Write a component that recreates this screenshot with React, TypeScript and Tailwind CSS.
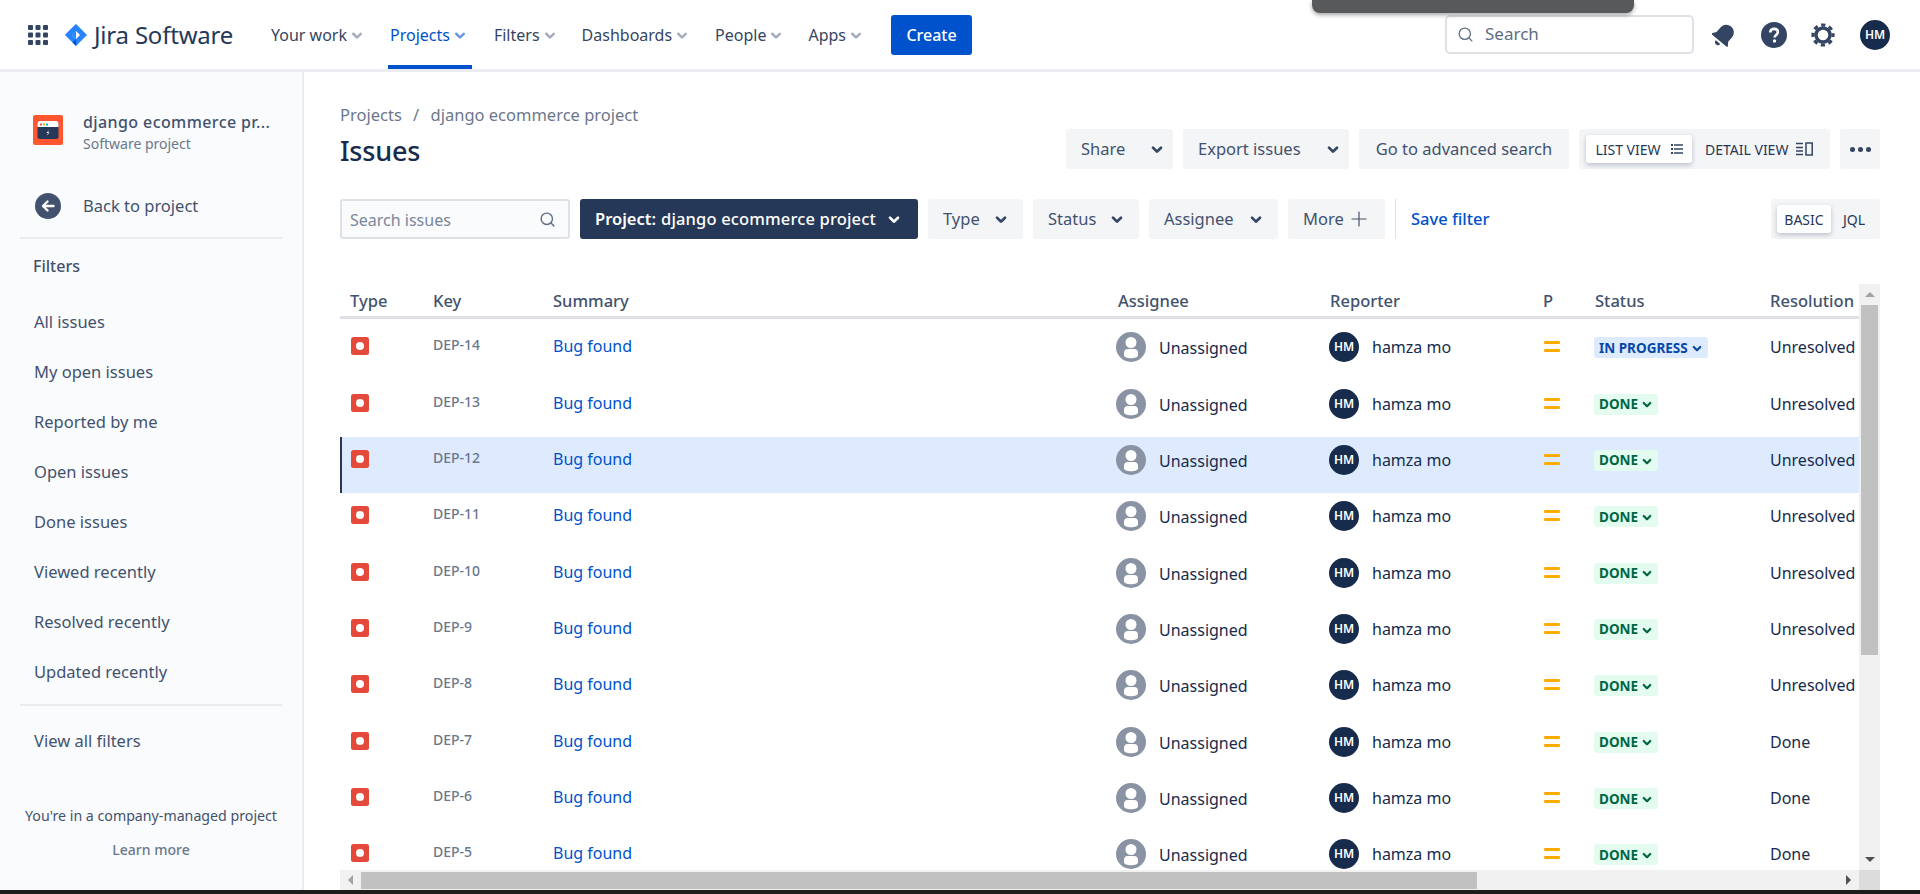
import { Search, Plus } from 'lucide-react';

const CHEVRON = 'M8.292 10.293a1.009 1.009 0 000 1.419l2.939 2.965c.218.215.5.322.779.322s.556-.107.769-.322l2.93-2.955a1.01 1.01 0 000-1.419.987.987 0 00-1.406 0l-2.298 2.317-2.307-2.327a.99.99 0 00-1.406 0z';

const navItems = [
  { label: 'Your work', className: 'ml-[37px]' },
  { label: 'Projects', className: 'ml-[24px]', active: true },
  { label: 'Filters', className: 'ml-[25px]' },
  { label: 'Dashboards', className: 'ml-[23px]' },
  { label: 'People', className: 'ml-[24px]' },
  { label: 'Apps', className: 'ml-[23px]' },
];

const filterLinks = [
  'All issues',
  'My open issues',
  'Reported by me',
  'Open issues',
  'Done issues',
  'Viewed recently',
  'Resolved recently',
  'Updated recently',
];

const issues = [
  { key: 'DEP-14', status: 'IN PROGRESS', resolution: 'Unresolved' },
  { key: 'DEP-13', status: 'DONE', resolution: 'Unresolved' },
  { key: 'DEP-12', status: 'DONE', resolution: 'Unresolved', selected: true },
  { key: 'DEP-11', status: 'DONE', resolution: 'Unresolved' },
  { key: 'DEP-10', status: 'DONE', resolution: 'Unresolved' },
  { key: 'DEP-9', status: 'DONE', resolution: 'Unresolved' },
  { key: 'DEP-8', status: 'DONE', resolution: 'Unresolved' },
  { key: 'DEP-7', status: 'DONE', resolution: 'Done' },
  { key: 'DEP-6', status: 'DONE', resolution: 'Done' },
  { key: 'DEP-5', status: 'DONE', resolution: 'Done' },
];

function Chevron({ className }: { className?: string }) {
  return (
    <svg viewBox="0 0 24 24" className={className} fill="currentColor">
      <path d={CHEVRON} />
    </svg>
  );
}

function GridIcon() {
  return (
    <svg width="20" height="20" viewBox="0 0 20 20" fill="#344563">
      {[0, 7.5, 15].map(y =>
        [0, 7.5, 15].map(x => <rect key={`${x}-${y}`} x={x} y={y} width="5" height="5" rx="1" />)
      )}
    </svg>
  );
}

function JiraLogo() {
  return (
    <svg width="22" height="22" viewBox="0 0 22 22">
      <path d="M11 0 L22 11 L11 22 L0 11 Z" fill="#2684ff" />
      <path d="M11 7 L15 11 L11 15 L7 11 Z" fill="#fff" />
      <path d="M11 0 L11 7 L7 11 L0 11 Z" fill="#2684ff" />
      <path d="M11 7 L7 11 L11 15 Z" fill="#2684ff" />
      <path d="M11 15 L11 22 L7.5 18.5 Z" fill="#0052cc" />
    </svg>
  );
}

function BellIcon() {
  return (
    <svg width="28" height="28" viewBox="0 0 24 24" fill="#344563" className="rotate-[40deg] -mx-[2px]">
      <path d="M12 2.5a6.5 6.5 0 00-6.5 6.5v5.2L3.4 17c-.4.6 0 1.3.7 1.3h15.8c.7 0 1.1-.7.7-1.3l-2.1-2.8V9A6.5 6.5 0 0012 2.5z" />
      <path d="M9.5 20h5a2.5 2.5 0 01-5 0z" />
    </svg>
  );
}

function HelpIcon() {
  return (
    <svg width="26" height="26" viewBox="0 0 26 26">
      <circle cx="13" cy="13" r="13" fill="#344563" />
      <path d="M9.2 10.4c0-2.2 1.7-3.5 3.9-3.5 2.2 0 3.8 1.3 3.8 3.2 0 2.8-3.3 2.8-3.3 5.4" fill="none" stroke="#fff" strokeWidth="2.6" />
      <circle cx="13.5" cy="19" r="1.7" fill="#fff" />
    </svg>
  );
}

function GearIcon() {
  return (
    <svg width="24" height="24" viewBox="0 0 24 24" fill="none" stroke="#344563">
      <circle cx="12" cy="12" r="7" strokeWidth="3.4" />
      <circle cx="12" cy="12" r="10" strokeWidth="3.2" strokeDasharray="4.2 3.65" strokeDashoffset="2.1" />
    </svg>
  );
}

function ProjectIcon() {
  return (
    <svg width="30" height="30" viewBox="0 0 30 30" className="shrink-0">
      <rect width="30" height="30" rx="2" fill="#ff5630" />
      <rect x="4.5" y="6" width="21" height="18" rx="2.5" fill="#253858" />
      <path d="M4.5 8.5a2.5 2.5 0 012.5-2.5h16a2.5 2.5 0 012.5 2.5V12h-21z" fill="#fff" />
      <rect x="7" y="8.5" width="2" height="2" fill="#ff5630" />
      <rect x="10" y="8.5" width="2" height="2" fill="#ffab00" />
      <rect x="13" y="8.5" width="2" height="2" fill="#00b8d9" />
      <path d="M16 15l-2.5 3h1.5l-1 2.5 2.5-3h-1.5z" fill="#fff" />
    </svg>
  );
}

function BackIcon() {
  return (
    <svg width="26" height="26" viewBox="0 0 26 26" className="shrink-0">
      <circle cx="13" cy="13" r="13" fill="#42526e" />
      <path d="M18.5 13h-10M12.5 8.5L8 13l4.5 4.5" fill="none" stroke="#fff" strokeWidth="2.4" strokeLinecap="round" strokeLinejoin="round" />
    </svg>
  );
}

function ListIcon() {
  return (
    <svg width="12" height="12" viewBox="0 0 12 12" fill="#344563">
      <rect x="0" y="1" width="2" height="2" />
      <rect x="3" y="1.25" width="9" height="1.5" />
      <rect x="0" y="5" width="2" height="2" />
      <rect x="3" y="5.25" width="9" height="1.5" />
      <rect x="0" y="9" width="2" height="2" />
      <rect x="3" y="9.25" width="9" height="1.5" />
    </svg>
  );
}

function DetailIcon() {
  return (
    <svg width="17" height="14" viewBox="0 0 17 14" fill="none" stroke="#344563" strokeWidth="1.5">
      <path d="M0 1.5h7M0 5.5h7M0 9h7M0 12.5h7" />
      <rect x="10" y="1" width="6.2" height="12" />
    </svg>
  );
}

function BugIcon() {
  return (
    <svg width="18" height="18" viewBox="0 0 18 18">
      <rect width="18" height="18" rx="2.5" fill="#e5493a" />
      <circle cx="9" cy="9" r="4" fill="#fff" />
    </svg>
  );
}

function UnassignedAvatar() {
  return (
    <svg width="30" height="30" viewBox="0 0 30 30" className="shrink-0">
      <circle cx="15" cy="15" r="15" fill="#8993a4" />
      <circle cx="15" cy="10.5" r="5.5" fill="#fff" />
      <path d="M8 21a4 4 0 014-4h6a4 4 0 014 4v2.5c0 1.6-3.1 2.7-7 2.7s-7-1.1-7-2.7z" fill="#fff" />
    </svg>
  );
}

function UserAvatar({ className }: { className: string }) {
  return (
    <div className={`shrink-0 rounded-full bg-[#172b4d] text-white font-semibold flex items-center justify-center ${className}`}>
      HM
    </div>
  );
}

function MediumPriority() {
  return (
    <svg width="16" height="11" viewBox="0 0 16 11" fill="#ffab00">
      <rect y="0" width="16" height="3" rx="1" />
      <rect y="8" width="16" height="3" rx="1" />
    </svg>
  );
}

function GrayButton({ label, chevron = true, className = '' }: { label: string; chevron?: boolean; className?: string }) {
  return (
    <button className={`h-10 rounded-[3px] bg-[#f4f5f7] text-[#42526e] text-[16.5px] flex items-center justify-between ${className}`}>
      <span>{label}</span>
      {chevron && <Chevron className="w-8 h-8 text-[#344563]" />}
    </button>
  );
}

function IssueRow({ issue }: { issue: (typeof issues)[number] }) {
  const inProgress = issue.status === 'IN PROGRESS';
  return (
    <div className={`h-[56.35px] shrink-0 grid grid-cols-[93px_120px_563px_213px_213px_52px_176px_89px] items-start relative ${issue.selected ? 'bg-[#deebff]' : ''}`}>
      {issue.selected && <div className="absolute left-0 top-0 bottom-0 w-[2px] bg-[#253858]" />}
      <div className="pl-[11px] pt-[13px]"><BugIcon /></div>
      <div className="pt-[11px] text-[14px] leading-5 font-medium text-[#6b778c]">{issue.key}</div>
      <div className="pt-[10px] text-[16px] leading-6 text-[#0052cc]">Bug found</div>
      <div className="pt-[8px] flex items-center gap-[13px] text-[16px] text-[#172b4d]">
        <UnassignedAvatar />
        <span className="mt-[2px]">Unassigned</span>
      </div>
      <div className="pt-[8px] flex items-center gap-[13px] text-[16px] text-[#172b4d]">
        <UserAvatar className="w-[30px] h-[30px] text-[12px]" />
        <span>hamza mo</span>
      </div>
      <div className="pl-[2px] pt-[17px]"><MediumPriority /></div>
      <div className="pt-[13px] flex">
        <span className={`h-[21px] flex items-center pl-[5px] pr-[4px] rounded-[3px] text-[13.5px] font-bold ${inProgress ? 'bg-[#deebff] text-[#0747a6]' : 'bg-[#e3fcef] text-[#006644]'}`}>
          {issue.status}
          <Chevron className="w-[26px] h-[26px] ml-[-4px] mr-[-6px]" />
        </span>
      </div>
      <div className="pt-[11px] text-[16px] leading-6 text-[#172b4d] overflow-hidden whitespace-nowrap w-[86px]">{issue.resolution}</div>
    </div>
  );
}

export default function App() {
  return (
    <div className="w-[1920px] h-[894px] overflow-hidden relative flex flex-col bg-white font-['Noto_Sans','Open_Sans',sans-serif] text-[#172b4d]">
      {/* Header */}
      <header className="h-[72px] shrink-0 flex items-start bg-white border-b-[3px] border-[#ebecf0]">
        <div className="h-[69px] w-full flex items-center pl-[28px] pr-[30px]">
          <GridIcon />
          <div className="ml-[17px]"><JiraLogo /></div>
          <span className="ml-[7px] text-[24px] tracking-[-0.2px] text-[#253858] w-[140px] whitespace-nowrap">Jira Software</span>
          {navItems.map(item => (
            <div key={item.label} className={`h-full relative flex items-center ${item.className}`}>
              <span className={`text-[16px] ${item.active ? 'text-[#0052cc]' : 'text-[#344563]'}`}>{item.label}</span>
              <Chevron className={`w-[30px] h-[30px] ml-[-5px] mr-[-6px] ${item.active ? 'text-[#6c98e2]' : 'text-[#a5adba]'}`} />
              {item.active && <div className="absolute left-[-2px] right-[-3px] bottom-0 h-1 bg-[#0052cc]" />}
            </div>
          ))}
          <button className="ml-[26px] w-[81px] h-10 rounded-[3px] bg-[#0052cc] text-white text-[16px] font-medium">Create</button>
          <div className="ml-auto w-[249px] h-[39px] rounded-[5px] border-2 border-[#dfe1e6] flex items-center pl-[10px] text-[#5e6c84]">
            <Search size={17} strokeWidth={1.8} />
            <span className="ml-[11px] text-[17px] -mt-[2px]">Search</span>
          </div>
          <div className="ml-[18px]"><BellIcon /></div>
          <div className="ml-[25px]"><HelpIcon /></div>
          <div className="ml-[24px]"><GearIcon /></div>
          <UserAvatar className="ml-[25px] w-[30px] h-[30px] text-[12px]" />
        </div>
      </header>

      {/* Dark bar hanging from the top of the window */}
      <div className="absolute left-[1312px] top-0 w-[322px] h-[13px] bg-[#58595b] rounded-b-[8px] shadow-[0_2px_4px_rgba(0,0,0,0.35)]" />

      <div className="flex-1 flex min-h-0">
        {/* Sidebar */}
        <aside className="w-[304px] shrink-0 bg-[#fafbfc] border-r-2 border-[#ebecf0] px-[20px] flex flex-col">
          <div className="pt-[43px] pl-[13px] flex items-start gap-[20px]">
            <ProjectIcon />
            <div className="-mt-[5px]">
              <div className="text-[16px] leading-[24px] tracking-[0.4px] font-medium text-[#42526e] whitespace-nowrap">django ecommerce pr...</div>
              <div className="text-[14px] leading-[20px] text-[#6b778c]">Software project</div>
            </div>
          </div>
          <div className="mt-[39px] pl-[15px] flex items-center gap-[22px]">
            <BackIcon />
            <span className="text-[16.5px] text-[#42526e]">Back to project</span>
          </div>
          <div className="mt-[18px] h-[2px] bg-[#ebecf0]" />
          <div className="mt-[15px] pl-[13px] text-[16px] leading-6 font-medium text-[#42526e]">Filters</div>
          <div className="mt-[32px] flex flex-col gap-[26px] pl-[14px]">
            {filterLinks.map(link => (
              <div key={link} className="text-[16.5px] leading-6 text-[#42526e]">{link}</div>
            ))}
          </div>
          <div className="mt-[20px] h-[2px] bg-[#ebecf0]" />
          <div className="mt-[23px] pl-[14px] text-[16.5px] leading-6 text-[#42526e]">View all filters</div>
          <div className="mt-[53px] text-center text-[14.2px] leading-5 text-[#42526e] whitespace-nowrap">You're in a company-managed project</div>
          <div className="mt-[14px] text-center text-[14px] leading-5 font-medium text-[#6b778c]">Learn more</div>
        </aside>

        {/* Main */}
        <main className="flex-1 min-w-0 pl-[36px] pr-[40px] flex flex-col">
          <div className="flex items-start justify-between h-[127px]">
            <div>
              <div className="mt-[31px] text-[16.5px] leading-6 text-[#6b778c]">
                Projects <span className="mx-[7px]">/</span> django ecommerce project
              </div>
              <h1 className="mt-[6px] text-[27px] leading-[36px] tracking-[-0.2px] font-medium text-[#172b4d]">Issues</h1>
            </div>
            <div className="mt-[57px] flex items-center gap-[10px]">
              <GrayButton label="Share" className="w-[107px] pl-[15px]" />
              <GrayButton label="Export issues" className="w-[166px] pl-[15px]" />
              <GrayButton label="Go to advanced search" chevron={false} className="w-[210px] justify-center" />
              <div className="w-[251px] h-10 rounded-[3px] bg-[#f4f5f7] flex items-center px-[7px] text-[14px] text-[#253858]">
                <div className="w-[106px] h-[28px] bg-white rounded-[3px] shadow-[0_2px_5px_rgba(9,30,66,0.25)] flex items-center justify-center gap-[10px]">
                  LIST VIEW <ListIcon />
                </div>
                <div className="ml-[13px] flex items-center gap-[8px] whitespace-nowrap">
                  DETAIL VIEW <DetailIcon />
                </div>
              </div>
              <div className="w-[40px] h-10 rounded-[3px] bg-[#f4f5f7] flex items-center justify-center gap-[3px]">
                <i className="w-[5px] h-[5px] rounded-full bg-[#344563]" />
                <i className="w-[5px] h-[5px] rounded-full bg-[#344563]" />
                <i className="w-[5px] h-[5px] rounded-full bg-[#344563]" />
              </div>
            </div>
          </div>

          {/* Filter bar */}
          <div className="flex items-center h-10 gap-[10px]">
            <div className="w-[230px] h-10 rounded-[3px] border-2 border-[#dfe1e6] bg-[#fafbfc] flex items-center justify-between pl-[8px] pr-[12px] text-[#5e6c84]">
              <span className="text-[16px] text-[#7a869a] mt-[2px]">Search issues</span>
              <Search size={17} strokeWidth={2} />
            </div>
            <button className="w-[338px] h-10 rounded-[3px] bg-[#253858] text-white text-[16.5px] flex items-center pl-[15px]">
              <span className="font-semibold">Project:</span>
              <span className="ml-[5px] tracking-[0.15px] font-medium whitespace-nowrap">django ecommerce project</span>
              <Chevron className="w-8 h-8 ml-[2px]" />
            </button>
            <GrayButton label="Type" className="w-[95px] pl-[15px] pr-[6px]" />
            <GrayButton label="Status" className="w-[106px] pl-[15px] pr-[6px]" />
            <GrayButton label="Assignee" className="w-[129px] pl-[15px] pr-[6px]" />
            <div className="w-[97px] h-10 rounded-[3px] bg-[#f4f5f7] text-[#42526e] text-[16.5px] flex items-center pl-[15px] gap-[3px]">
              More <Plus size={24} strokeWidth={1.2} />
            </div>
            <div className="w-px h-10 bg-[#dfe1e6]" />
            <span className="ml-[5px] text-[16.5px] font-medium text-[#0052cc]">Save filter</span>
            <div className="ml-auto w-[109px] h-10 rounded-[3px] bg-[#f4f5f7] flex items-center px-[6px] text-[14px] text-[#253858]">
              <div className="w-[54px] h-[28px] bg-white rounded-[3px] shadow-[0_2px_5px_rgba(9,30,66,0.25)] flex items-center justify-center">BASIC</div>
              <span className="ml-[12px]">JQL</span>
            </div>
          </div>

          {/* Issue table */}
          <div className="mt-[45px] flex-1 min-h-0 flex flex-col">
            <div className="flex-1 min-h-0 flex">
              <div className="flex-1 min-w-0 flex flex-col overflow-hidden">
                <div className="h-[35px] shrink-0 border-b-[3px] border-[#dfe1e6] grid grid-cols-[93px_120px_565px_212px_213px_52px_175px_89px] items-start text-[16.5px] leading-6 font-medium text-[#42526e]">
                  <span className="pl-[10px] pt-[5px]">Type</span>
                  <span className="pt-[5px]">Key</span>
                  <span className="pt-[5px]">Summary</span>
                  <span className="pt-[5px]">Assignee</span>
                  <span className="pt-[5px]">Reporter</span>
                  <span className="pt-[5px]">P</span>
                  <span className="pt-[5px]">Status</span>
                  <span className="pt-[5px] whitespace-nowrap">Resolution</span>
                </div>
                <div className="pt-[5.4px] flex flex-col">
                  {issues.map(issue => <IssueRow key={issue.key} issue={issue} />)}
                </div>
              </div>
              {/* Vertical scrollbar */}
              <div className="w-[21px] shrink-0 bg-[#f1f1f1] flex flex-col items-center">
                <div className="h-[21px] shrink-0 flex items-center justify-center">
                  <div className="w-0 h-0 border-x-[5px] border-x-transparent border-b-[5px] border-b-[#a3a3a3]" />
                </div>
                <div className="w-[17px] h-[350px] bg-[#c1c1c1]" />
                <div className="mt-auto h-[21px] shrink-0 flex items-center justify-center">
                  <div className="w-0 h-0 border-x-[5px] border-x-transparent border-t-[5px] border-t-[#505050]" />
                </div>
              </div>
            </div>
            {/* Horizontal scrollbar */}
            <div className="h-[20px] shrink-0 flex">
              <div className="flex-1 bg-[#f1f1f1] flex items-center">
                <div className="w-[21px] shrink-0 flex justify-center">
                  <div className="w-0 h-0 border-y-[5px] border-y-transparent border-r-[5px] border-r-[#a3a3a3]" />
                </div>
                <div className="w-[1116px] h-[17px] bg-[#c1c1c1]" />
                <div className="ml-auto w-[21px] shrink-0 flex justify-center">
                  <div className="w-0 h-0 border-y-[5px] border-y-transparent border-l-[5px] border-l-[#505050]" />
                </div>
              </div>
              <div className="w-[21px] bg-[#dcdcdc]" />
            </div>
          </div>
        </main>
      </div>

      {/* Strip of the desktop below the window */}
      <div className="h-1 shrink-0 bg-[#1d1d1b]" />
    </div>
  );
}
